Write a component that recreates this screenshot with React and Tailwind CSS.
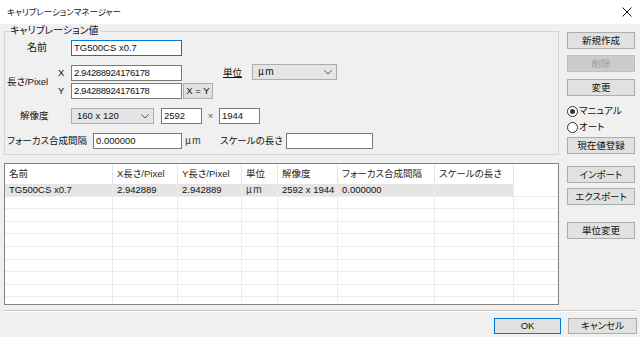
import React from 'react';

const cols = [
  { key: 'name', label: '名前', w: 'w-[108px]' },
  { key: 'x', label: 'X長さ/Pixel', w: 'w-[65px]' },
  { key: 'y', label: 'Y長さ/Pixel', w: 'w-[64px]' },
  { key: 'unit', label: '単位', w: 'w-[36px]' },
  { key: 'res', label: '解像度', w: 'w-[60px]' },
  { key: 'focus', label: 'フォーカス合成間隔', w: 'w-[97px]' },
  { key: 'scale', label: 'スケールの長さ', w: 'w-[79px]' },
];

const rows = [
  { name: 'TG500CS x0.7', x: '2.942889', y: '2.942889', unit: 'um', res: '2592 x 1944', focus: '0.000000', scale: '' },
];

const Um = () => (
  <span className="font-['Noto_Sans_CJK_JP',sans-serif] [font-feature-settings:normal] tracking-[-0.5px]">μ m</span>
);

const Field = ({ w, focus, children, className = '' }) => (
  <div
    className={`h-[16px] ${w} shrink-0 bg-white border ${focus ? 'border-[#0078d7]' : 'border-[#7a7a7a]'} flex items-center px-[2px] whitespace-nowrap ${className}`}
  >
    {children}
  </div>
);

const Combo = ({ w, children, className = '' }) => (
  <div
    className={`h-[16px] ${w} shrink-0 bg-[#e5e5e5] border border-[#adadad] flex items-center justify-between pl-[5px] pr-[4px] ${className}`}
  >
    <span>{children}</span>
    <svg width="8" height="5" viewBox="0 0 8 5">
      <path d="M0.5 0.5L4 4L7.5 0.5" fill="none" stroke="#555" strokeWidth="1" />
    </svg>
  </div>
);

const Btn = ({ children, disabled, className = '' }) => (
  <div
    className={`h-[17px] w-full border flex items-center justify-center whitespace-nowrap ${disabled ? 'bg-[#cccccc] border-[#bfbfbf] text-[#9a9a9a]' : 'bg-[#e1e1e1] border-[#adadad]'} ${className}`}
  >
    {children}
  </div>
);

const Radio = ({ checked, children, className = '' }) => (
  <div className={`h-[16px] flex items-center ${className}`}>
    <div className="w-[11px] h-[11px] rounded-full border border-[#333] bg-white flex items-center justify-center">
      {checked && <div className="w-[5px] h-[5px] rounded-full bg-[#333]" />}
    </div>
    <span className="ml-[1px]">{children}</span>
  </div>
);

export default function App() {
  return (
    <div className="w-[640px] h-[337px] bg-[#f0f0f0] flex flex-col overflow-hidden font-['Liberation_Sans','Noto_Sans_CJK_JP',sans-serif] text-[9.5px] leading-none text-[#111] whitespace-nowrap [font-feature-settings:'palt']">
      <div className="h-[24px] shrink-0 bg-white flex items-center justify-between pl-[7px] pr-[8px]">
        <span className="text-[8.5px]">キャリブレーションマネージャー</span>
        <svg width="10" height="10" viewBox="0 0 10 10">
          <path d="M0.5 0.5L9.5 9.5M9.5 0.5L0.5 9.5" stroke="#111" strokeWidth="1" />
        </svg>
      </div>

      <div className="flex pl-[4px] pr-[5px]">
        <div className="w-[555px] flex flex-col">
          <div className="relative mt-[7px] h-[124px] border border-[#d5d5d5] pt-[8px]">
            <span className="absolute -top-[6px] left-[4px] px-[1px] bg-[#f0f0f0] text-[10px]">
              キャリブレーション値
            </span>

            <div className="flex items-center h-[16px]">
              <div className="w-[66px] pl-[22px] text-[10px]">名前</div>
              <Field w="w-[111px]" focus>TG500CS x0.7</Field>
            </div>

            <div className="flex mt-[9px]">
              <div className="w-[53px] pl-[2px] flex items-center">長さ/Pixel</div>
              <div className="flex flex-col">
                <div className="flex items-center h-[16px]">
                  <span className="w-[13px]">X</span>
                  <Field w="w-[111px]">
                    <span className="tracking-[-0.4px]">2.94288924176178</span>
                  </Field>
                  <span className="ml-[41px] w-[29px] underline">単位</span>
                  <Combo w="w-[85px]" className="-mt-[2px]">
                    <Um />
                  </Combo>
                </div>
                <div className="flex items-center h-[16px] mt-[2px]">
                  <span className="w-[13px]">Y</span>
                  <Field w="w-[111px]">
                    <span className="tracking-[-0.4px]">2.94288924176178</span>
                  </Field>
                  <div className="ml-[1px] w-[30px] h-[16px] bg-[#e1e1e1] border border-[#adadad] flex items-center justify-center">
                    X = Y
                  </div>
                </div>
              </div>
            </div>

            <div className="flex items-center h-[16px] mt-[9px]">
              <div className="w-[66px] pl-[15px]">解像度</div>
              <Combo w="w-[83px]">160 x 120</Combo>
              <Field w="w-[41px]" className="ml-[7px]">2592</Field>
              <span className="w-[17px] text-center text-[#555]">×</span>
              <Field w="w-[41px]">1944</Field>
            </div>

            <div className="flex items-center h-[16px] mt-[9px]">
              <div className="w-[88px] pl-[2px]">フォーカス合成間隔</div>
              <Field w="w-[89px]">0.000000</Field>
              <span className="ml-[3px] w-[35px] text-[#333]">
                <Um />
              </span>
              <span className="w-[66px]">スケールの長さ</span>
              <Field w="w-[87px]" />
            </div>
          </div>

          <div className="mt-[8px] h-[142px] border border-[#828282] bg-white overflow-hidden">
            <div className="flex h-[20px]">
              {cols.map((c) => (
                <div key={c.key} className={`${c.w} shrink-0 h-full pl-[4px] flex items-center border-r border-[#e5e5e5] text-[#1e1e1e]`}>
                  {c.label}
                </div>
              ))}
              <div className="flex-1" />
            </div>
            {Array.from({ length: 11 }).map((_, i) => {
              const r = rows[i];
              return (
                <div key={i} className="flex h-[12.6px] border-b border-[#ececec]">
                  {cols.map((c) => (
                    <div
                      key={c.key}
                      className={`${c.w} shrink-0 h-full pl-[4px] flex items-center border-r border-[#ececec] ${r ? 'bg-[#e5e5e5]' : ''}`}
                    >
                      {r && (c.key === 'unit' ? <span className="text-[#333]"><Um /></span> : r[c.key])}
                    </div>
                  ))}
                  <div className="flex-1" />
                </div>
              );
            })}
          </div>
        </div>

        <div className="ml-[8px] w-[68px] flex flex-col">
          <Btn className="mt-[8px]">新規作成</Btn>
          <Btn disabled className="mt-[6px]">削除</Btn>
          <Btn className="mt-[7px]">変更</Btn>
          <Radio checked className="mt-[7px]">マニュアル</Radio>
          <Radio>オート</Radio>
          <Btn className="mt-[2px]">現在値登録</Btn>
          <Btn className="mt-[12px]">インポート</Btn>
          <Btn className="mt-[5px]">エクスポート</Btn>
          <Btn className="mt-[17px]">単位変更</Btn>
        </div>
      </div>

      <div className="mt-[5px] ml-[4px] mr-[3px] border-t border-[#c8c8c8] border-b border-b-white" />

      <div className="flex justify-end pr-[3px] mt-[6px]">
        <div className="w-[67px] h-[16px] bg-[#e1e1e1] border border-[#0078d7] flex items-center justify-center">
          OK
        </div>
        <div className="ml-[7px] w-[69px] h-[16px] bg-[#e1e1e1] border border-[#adadad] flex items-center justify-center">
          キャンセル
        </div>
      </div>
    </div>
  );
}
